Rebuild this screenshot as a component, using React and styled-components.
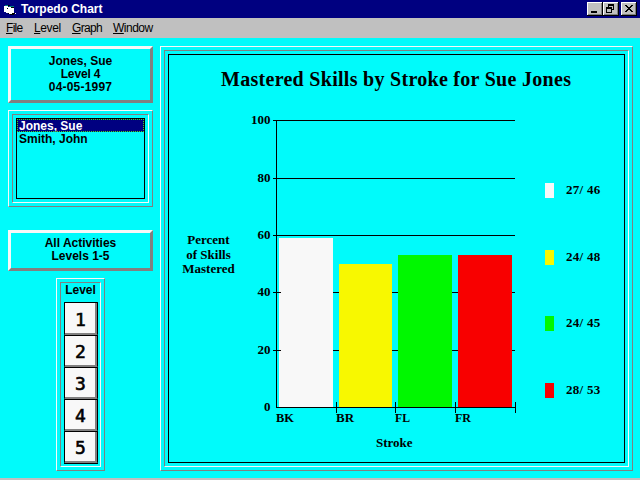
import React from "react";
import styled, { createGlobalStyle } from "styled-components";

const CYAN = "#00fbfb";
const WHITE = "#f8f8f8";
const GRAY = "#808080";

const GlobalStyle = createGlobalStyle`
  * { box-sizing: border-box; }
  body { margin: 0; background: #c0c0c0; overflow: hidden; }
`;

const Window = styled.div`
  width: 640px;
  height: 480px;
  display: flex;
  flex-direction: column;
  background: #c0c0c0;
  font: 700 12px/13px "Liberation Sans", sans-serif;
  color: #000;
  white-space: nowrap;
`;

const TitleBar = styled.header`
  height: 18px;
  display: flex;
  align-items: center;
  padding: 0 3px 0 3px;
  background: #000080;
  color: #fff;
`;

const AppIcon = styled.svg`
  width: 16px;
  height: 16px;
  flex: none;
`;

const Caption = styled.span`
  flex: 1;
  padding-left: 2px;
  letter-spacing: -0.03px;
`;

const CaptionButton = styled.button`
  width: 16px;
  height: 14px;
  padding: 0;
  margin-left: ${(p) => (p.$spaced ? 2 : 0)}px;
  border: 0;
  background: #c0c0c0;
  box-shadow: inset -1px -1px #000, inset 1px 1px #fff, inset -2px -2px #808080;
  svg { display: block; }
`;

const MenuBar = styled.nav`
  height: 20px;
  display: flex;
  align-items: center;
  padding: 0 6px;
  gap: 12px;
  font-weight: 400;
`;

const MenuItem = styled.span`
  width: ${(p) => p.$width}px;
  letter-spacing: ${(p) => p.$track}px;
  u { text-underline-offset: 1px; text-decoration-thickness: 1px; text-decoration-skip-ink: none; }
`;

const Client = styled.main`
  height: 440px;
  padding: 8px 7px 7px 8px;
  display: flex;
  gap: 7px;
  background: ${CYAN};
`;

const Sidebar = styled.aside`
  width: 145px;
  display: flex;
  flex-direction: column;
`;

const RaisedPanel = styled.section`
  height: ${(p) => p.$height}px;
  padding-top: ${(p) => p.$top}px;
  border: 3px solid;
  border-color: ${WHITE} ${GRAY} ${GRAY} ${WHITE};
  text-align: center;
`;

const Line = styled.div`
  letter-spacing: ${(p) => p.$track || 0}px;
`;

const Frame = styled.section`
  width: ${(p) => p.$width}px;
  height: ${(p) => p.$height}px;
  margin: ${(p) => p.$margin || 0};
  padding: 3px;
  border: 1px solid;
  border-color: ${WHITE} ${GRAY} ${GRAY} ${WHITE};
`;

const FrameInset = styled.div`
  height: 100%;
  padding: ${(p) => p.$pad};
  border: 1px solid;
  border-color: ${GRAY} ${WHITE} ${WHITE} ${GRAY};
`;

const ListBox = styled.ul`
  height: 81px;
  width: 129px;
  margin: 0;
  padding: 0;
  list-style: none;
  border: 1px solid #000;
`;

const ListItem = styled.li`
  height: 13px;
  padding-left: 2px;
  line-height: 14px;
  color: ${(p) => (p.$selected ? "#fff" : "#000")};
  background: ${(p) => (p.$selected ? "#000080" : "transparent")};
  outline: ${(p) => (p.$selected ? "1px dotted #40e020" : "none")};
  outline-offset: -1px;
`;

const LevelHeading = styled.div`
  height: 19px;
  padding-top: 1px;
  text-align: center;
`;

const LevelStack = styled.div`
  width: 34px;
  margin-left: 3px;
  display: flex;
  flex-direction: column;
  border-bottom: 1px solid #000;
`;

const LevelButton = styled.button`
  height: ${(p) => (p.$first ? 33 : 32)}px;
  padding: 0 1px 0 0;
  border: 1px solid #000;
  border-bottom: 0;
  border-radius: 1px;
  background: ${WHITE};
  box-shadow: inset -2px -2px ${GRAY};
  font: 400 18px/31px "DejaVu Sans Mono", monospace;
  -webkit-text-stroke: 0.6px #000;
  color: #000;
`;

const ChartPanel = styled.div`
  height: 409px;
  border: 1px solid #000;
  display: flex;
  flex-direction: column;
  font: 700 13px/14.5px "Liberation Serif", serif;
`;

const ChartTitle = styled.h1`
  margin: 0;
  height: 55px;
  padding: 12px 0 0 52px;
  font-size: 20px;
  line-height: 24px;
  letter-spacing: 0.29px;
`;

const ChartBody = styled.div`
  height: 320px;
  display: grid;
  grid-template-columns: 78px 298px 79px;
`;

const AxisLabel = styled.div`
  padding: 123px 0 0 1px;
  text-align: center;
`;

const Plot = styled.svg`
  display: block;
  text { font: 700 13px "Liberation Serif", serif; }
`;

const XAxisLabel = styled.div`
  padding: 6px 0 0 207px;
`;

const Legend = styled.div`
  padding-top: 73px;
  display: flex;
  flex-direction: column;
  gap: 51.6px;
`;

const LegendItem = styled.div`
  height: 15px;
  display: flex;
  align-items: center;
  gap: 12px;
  letter-spacing: 0.3px;
`;

const Swatch = styled.span`
  width: 9px;
  height: 15px;
  background: ${(p) => p.$color};
`;

const series = [
  { name: "BK", x: 279, w: 54, y: 238, label: 276, len: 18, color: WHITE, score: "27/ 46" },
  { name: "BR", x: 339, w: 53, y: 264, label: 336, len: 18, color: "#f8f800", score: "24/ 48" },
  { name: "FL", x: 398, w: 54, y: 255, label: 395, len: 15, color: "#00f800", score: "24/ 45" },
  { name: "FR", x: 458, w: 54, y: 255, label: 455, len: 16, color: "#f80000", score: "28/ 53" },
];
const grid = [[100, 120], [80, 178], [60, 235], [40, 292], [20, 350], [0, 407]];

function StrokePlot() {
  return (
    <Plot width="298" height="320" viewBox="247 110 298 320">
      <g shapeRendering="crispEdges" fill="#000">
        {grid.map(([v, y]) => (
          <rect key={v} x={v ? 273 : 276} y={y} width={v ? 242 : 240} height="1" />
        ))}
        {series.map((s) => (
          <rect key={s.name} x={s.x} y={s.y} width={s.w} height={407 - s.y} fill={s.color} />
        ))}
        {[[80, 178], [60, 235], [40, 292], [20, 350]].map(([v, y]) => (
          <rect key={v} x="273" y={y} width="8" height="1" />
        ))}
        <rect x="276" y="120" width="1" height="288" />
        {[336, 395, 455, 515].map((x) => (
          <rect key={x} x={x} y="402" width="1" height="11" />
        ))}
      </g>
      {grid.map(([v, y]) => (
        <text key={v} x="270.5" y={y + 4.3} textAnchor="end">{v}</text>
      ))}
      {series.map((s) => (
        <text key={s.name} x={s.label} y="422" textLength={s.len} lengthAdjust="spacingAndGlyphs">{s.name}</text>
      ))}
    </Plot>
  );
}

export default function App() {
  return (
    <Window>
      <GlobalStyle />
      <TitleBar>
        <AppIcon viewBox="0 0 16 16" shapeRendering="crispEdges">
          <path fill="#000" d="M5 6h6v7H5zM9 7h2v7H7v-1h2zM11 12h2v1h-2z" />
          <path fill="#fff" d="M1 5h4v1h3v1h3v5H9v1H6v-1H3v-1H1z" />
          <path fill="#008080" d="M2 4h4v1H2zM6 5h5v1H6z" />
          <path fill="#000" d="M5 4h2v1H5zM4 7h1v1H4zM9 6h2v1H9z" />
          <path fill="#fff" d="M12 12h1v1h-1z" />
        </AppIcon>
        <Caption>Torpedo Chart</Caption>
        <CaptionButton aria-label="Minimize">
          <svg width="16" height="14"><path d="M4 11h6v-2H4z" /></svg>
        </CaptionButton>
        <CaptionButton aria-label="Restore">
          <svg width="16" height="14" shapeRendering="crispEdges">
            <path fillRule="evenodd" d="M5 2h6v6H9V7h1V4H6v1H5zM3 5h6v6H3zM4 7v3h4V7z" />
          </svg>
        </CaptionButton>
        <CaptionButton aria-label="Close" $spaced>
          <svg width="16" height="14" shapeRendering="crispEdges">
            <path d="M4 3h2v1h1v1h2V4h1V3h2v1h-1v1h-1v1H9v1h1v1h1v1h1v1h-2V9H9V8H7v1H6v1H4V9h1V8h1V7h1V6H6V5H5V4H4z" />
          </svg>
        </CaptionButton>
      </TitleBar>
      <MenuBar>
        <MenuItem $width={16} $track={-0.7}><u>F</u>ile</MenuItem>
        <MenuItem $width={26} $track={-0.4}><u>L</u>evel</MenuItem>
        <MenuItem $width={29} $track={-0.7}><u>G</u>raph</MenuItem>
        <MenuItem $width={40} $track={-0.5}><u>W</u>indow</MenuItem>
      </MenuBar>
      <Client>
        <Sidebar>
          <RaisedPanel $height={57} $top={6}>
            <Line>Jones, Sue</Line>
            <Line $track={-0.15}>Level 4</Line>
            <Line $track={0.2}>04-05-1997</Line>
          </RaisedPanel>
          <Frame $width={145} $height={97} $margin="7px 0 23px">
            <FrameInset $pad="3px">
              <ListBox>
                <ListItem $selected>Jones, Sue</ListItem>
                <ListItem>Smith, John</ListItem>
              </ListBox>
            </FrameInset>
          </Frame>
          <RaisedPanel $height={41} $top={4}>
            <Line>All Activities</Line>
            <Line>Levels 1-5</Line>
          </RaisedPanel>
          <Frame $width={49} $height={193} $margin="7px 0 0 48px">
            <FrameInset $pad="0">
              <LevelHeading>Level</LevelHeading>
              <LevelStack>
                {[1, 2, 3, 4, 5].map((n) => (
                  <LevelButton key={n} $first={n === 1}>{n}</LevelButton>
                ))}
              </LevelStack>
            </FrameInset>
          </Frame>
        </Sidebar>
        <Frame $width={473} $height={425}>
          <FrameInset $pad="3px">
            <ChartPanel>
              <ChartTitle>Mastered Skills by Stroke for Sue Jones</ChartTitle>
              <ChartBody>
                <AxisLabel>
                  <Line>Percent</Line>
                  <Line>of Skills</Line>
                  <Line>Mastered</Line>
                </AxisLabel>
                <StrokePlot />
                <Legend>
                  {series.map((s) => (
                    <LegendItem key={s.name}>
                      <Swatch $color={s.color} />
                      {s.score}
                    </LegendItem>
                  ))}
                </Legend>
              </ChartBody>
              <XAxisLabel>Stroke</XAxisLabel>
            </ChartPanel>
          </FrameInset>
        </Frame>
      </Client>
    </Window>
  );
}
